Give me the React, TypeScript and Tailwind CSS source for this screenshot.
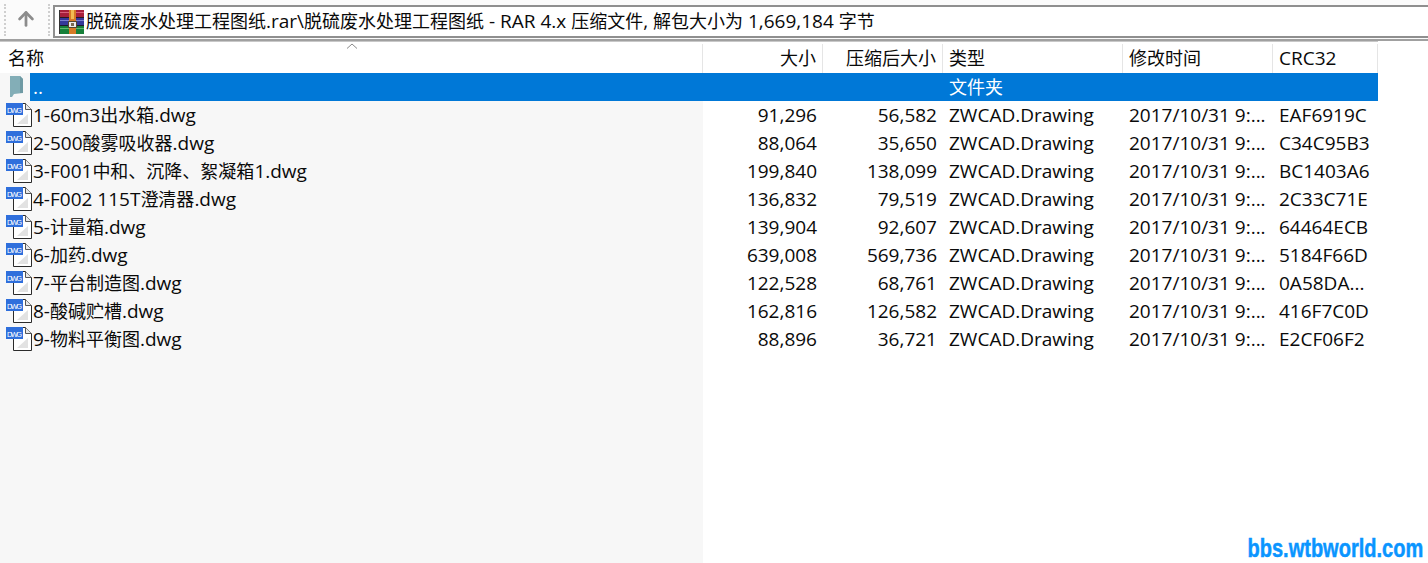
import React from 'react';
import { ArrowUp } from 'lucide-react';

const FONT = '[font-family:"Open_Sans","Noto_Sans_CJK_SC",sans-serif]';

const rows = [
  { name: '1-60m3出水箱.dwg', size: '91,296', packed: '56,582', crc: 'EAF6919C' },
  { name: '2-500酸雾吸收器.dwg', size: '88,064', packed: '35,650', crc: 'C34C95B3' },
  { name: '3-F001中和、沉降、絮凝箱1.dwg', size: '199,840', packed: '138,099', crc: 'BC1403A6' },
  { name: '4-F002 115T澄清器.dwg', size: '136,832', packed: '79,519', crc: '2C33C71E' },
  { name: '5-计量箱.dwg', size: '139,904', packed: '92,607', crc: '64464ECB' },
  { name: '6-加药.dwg', size: '639,008', packed: '569,736', crc: '5184F66D' },
  { name: '7-平台制造图.dwg', size: '122,528', packed: '68,761', crc: '0A58DA...' },
  { name: '8-酸碱贮槽.dwg', size: '162,816', packed: '126,582', crc: '416F7C0D' },
  { name: '9-物料平衡图.dwg', size: '88,896', packed: '36,721', crc: 'E2CF06F2' },
];

// latin runs are a touch larger than the CJK ones in the original font
const Mixed = ({ text }: { text: string }) => (
  <>
    {text.split(/([\u3000-\u9fff]+)/).map((part, i) =>
      i % 2 === 1 ? (
        <span key={i} className="text-[18px]">
          {part}
        </span>
      ) : (
        part
      )
    )}
  </>
);

const RarIcon = () => (
  <svg width="25" height="24" viewBox="0 0 25 24" className="shrink-0">
    <rect x="0" y="0" width="25" height="7" fill="#a81f3a" />
    <rect x="0" y="8" width="25" height="7" fill="#34389a" />
    <rect x="0" y="16" width="25" height="8" fill="#17803a" />
    <rect x="0" y="7" width="25" height="1" fill="#2a1a20" />
    <rect x="0" y="15" width="25" height="1" fill="#1a1a30" />
    <rect x="0" y="2" width="25" height="1" fill="#d9607a" />
    <rect x="0" y="10" width="25" height="1" fill="#7a80d0" />
    <rect x="0" y="18" width="25" height="1" fill="#5fbb70" />
    <rect x="0" y="0" width="1" height="24" fill="#333" />
    <rect x="10" y="0" width="7" height="24" fill="#d67a26" />
    <rect x="12" y="0" width="3" height="9" fill="#f2bb52" />
    <rect x="9.5" y="11.5" width="8" height="6" fill="#ececec" stroke="#54462f" strokeWidth="1" />
    <rect x="12" y="13" width="3" height="3" fill="#7a6a50" />
  </svg>
);

const DwgIcon = () => (
  <svg width="26" height="26" viewBox="0 0 26 26" className="shrink-0">
    <path d="M7.5 1.5H19.5L25.5 7.5V24.5H7.5Z" fill="#fff" stroke="#2b2b2b" strokeWidth="1" />
    <path d="M19.5 1.5V7.5H25.5" fill="#e8e8e8" stroke="#555" strokeWidth="1" />
    <path d="M11 22L22 12V22Z" fill="#e2e2e2" />
    <rect x="0" y="1" width="17" height="12" fill="#2f6fdc" />
    <text x="1" y="10.5" fontSize="7.5" fontFamily="Liberation Sans" fill="#fff" textLength="15">
      DWG
    </text>
  </svg>
);

const FolderIcon = () => (
  <svg width="16" height="22" viewBox="0 0 16 22">
    <path d="M1 0H11L14 3V17L5 18L3 21H1Z" fill="#83aeb7" />
    <path d="M11 0L14 3V17H11Z" fill="#6f9aa4" />
  </svg>
);

const Header = ({ label, w, right }: { label: string; w: string; right?: boolean }) => (
  <div className={`${w} h-full flex items-center px-[6px] border-r border-[#e5e5e5] ${right ? 'justify-end' : ''}`}>
    <Mixed text={label} />
  </div>
);

export default function App() {
  return (
    <div className={`relative h-[563px] w-[1428px] overflow-hidden bg-white text-[19px] text-[#0a0a0a] ${FONT}`}>
      <div className="h-[41px] flex items-start bg-[#fbfbfb] border-b-2 border-[#a0a0a0]">
        <div className="h-[38px] w-[53px] flex items-center justify-center relative">
          <div className="absolute left-[4px] top-[4px] h-[32px] border-l-2 border-dotted border-[#cfcfcf]" />
          <div className="absolute left-[48px] top-[4px] h-[32px] border-l-2 border-dotted border-[#cfcfcf]" />
          <ArrowUp className="w-[22px] h-[22px] text-[#8c8c8c] -ml-[1px]" strokeWidth={3} />
        </div>
        <div className="mt-[5px] h-[33px] flex-1 flex items-center gap-[4px] pl-[4px] bg-white border-y-2 border-l-2 border-[#8f8f8f]">
          <RarIcon />
          <span className="whitespace-nowrap leading-none -ml-[2px]">
            <Mixed text="脱硫废水处理工程图纸.rar\脱硫废水处理工程图纸 - RAR 4.x 压缩文件, 解包大小为 1,669,184 字节" />
          </span>
        </div>
      </div>

      <div className="relative flex h-[32px] pt-[2px] w-[1378px] border-t border-[#c8c8c8]">
        <div className="w-[703px] h-full flex items-center pl-[8px] border-r border-[#e5e5e5]">
          <Mixed text="名称" />
        </div>
        <Header label="大小" w="w-[120px]" right />
        <Header label="压缩后大小" w="w-[120px]" right />
        <Header label="类型" w="w-[180px]" />
        <Header label="修改时间" w="w-[150px]" />
        <Header label="CRC32" w="w-[105px]" />
        <svg width="12" height="6" viewBox="0 0 12 6" className="absolute left-[346px] top-[1px]">
          <path d="M1 5.5L6 1L11 5.5" fill="none" stroke="#8a8a8a" strokeWidth="1" />
        </svg>
      </div>

      <div className="flex h-[28px] w-[1378px] items-center">
        <div className="w-[30px] h-full bg-[#f7f7f7] flex items-center pl-[9px]">
          <FolderIcon />
        </div>
        <div className="flex-1 h-full bg-[#0078d7] text-white flex items-center">
          <span className="w-[913px] pl-[3px]">..</span>
          <span className="pl-[6px]">
            <Mixed text="文件夹" />
          </span>
        </div>
      </div>

      {rows.map((r) => (
        <div key={r.name} className="flex h-[28px] w-[1378px] items-center whitespace-nowrap">
          <div className="w-[703px] h-full bg-[#f7f7f7] flex items-center pl-[6px] gap-[1px]">
            <DwgIcon />
            <span>
              <Mixed text={r.name} />
            </span>
          </div>
          <div className="w-[120px] text-right pr-[6px]">{r.size}</div>
          <div className="w-[120px] text-right pr-[6px]">{r.packed}</div>
          <div className="w-[180px] pl-[6px]">ZWCAD.Drawing</div>
          <div className="w-[150px] pl-[6px]">2017/10/31 9:...</div>
          <div className="w-[105px] pl-[6px]">{r.crc}</div>
        </div>
      ))}

      <div className="w-[703px] h-[300px] bg-[#f7f7f7]" />

      <div className='absolute right-[5px] bottom-[2px] origin-right scale-x-[0.77] text-[#0a95ff] text-[26px] font-bold leading-none whitespace-nowrap [-webkit-text-stroke:0.5px_#0a95ff] [font-family:"Liberation_Sans",sans-serif]'>
        bbs.wtbworld.com
      </div>
    </div>
  );
}
